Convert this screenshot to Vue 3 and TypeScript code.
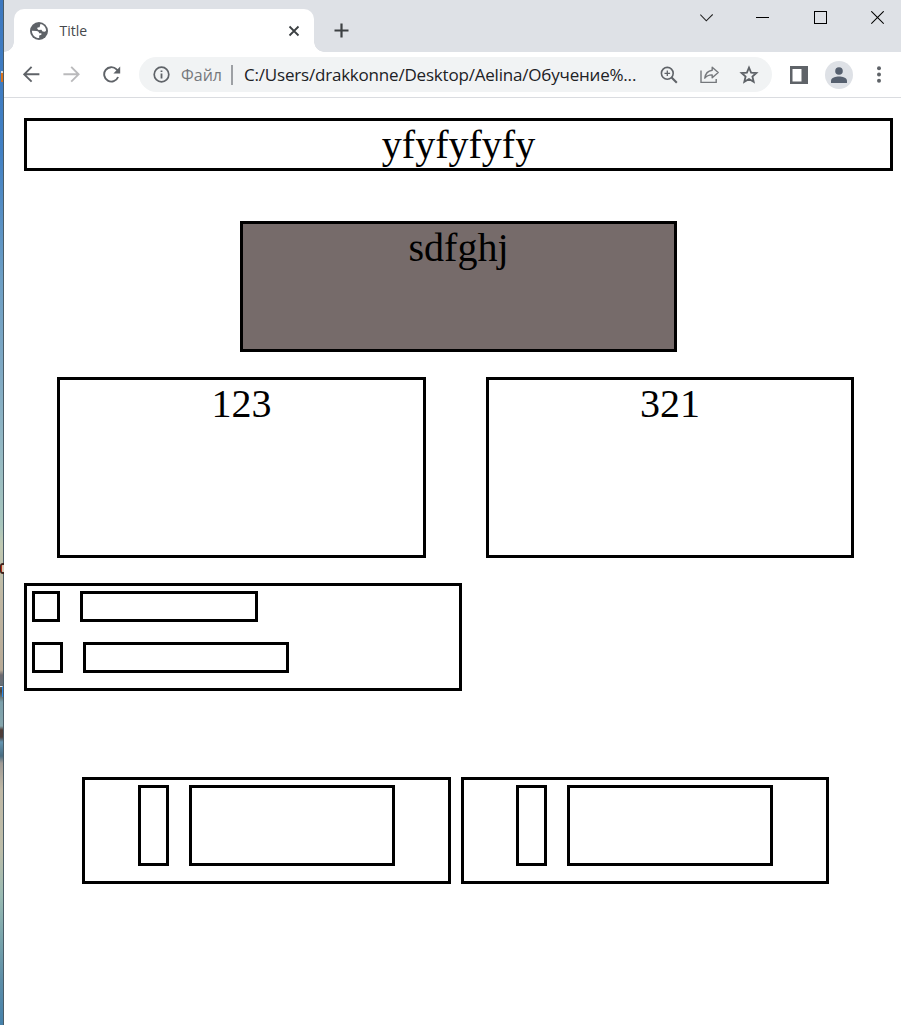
<script setup lang="ts">
interface Panel {
  id: string
  label: string
}

const panels: Panel[] = [
  { id: 'left', label: '123' },
  { id: 'right', label: '321' },
]
const rows: string[] = ['short', 'long']
const cards: string[] = ['first', 'second']
</script>

<template>
  <div class="screen">
    <div class="desktop">
      <i class="spot spot-orange"></i>
      <i class="spot spot-red"></i>
      <i class="spot spot-blue"></i>
    </div>
    <div class="window">
      <header class="tabstrip">
        <div class="tab">
          <svg class="globe" width="20" height="20" viewBox="0 0 20 20">
            <circle cx="10" cy="10" r="9" fill="#5f6368" />
            <path d="M11.4 3 C14.6 3.6 17 6.4 17.1 9.6 L16 10.8 L13.6 10.4 L12.4 8.8 L9.6 9 L8.2 7.8 L8.6 6.6 L10.6 6.2 Z" fill="#fff" />
            <path d="M2.9 9.8 L7.4 9.9 C9.4 10 10 11.2 10.2 12.2 H12.4 V13.8 L10.2 14.6 V17.1 C6 17.1 2.9 13.9 2.9 9.8 Z" fill="#fff" />
          </svg>
          <span class="tab-title">Title</span>
          <svg class="tab-close" width="12" height="12" viewBox="0 0 12 12">
            <path d="M1.5 1.5 L10.5 10.5 M10.5 1.5 L1.5 10.5" stroke="#3c4043" stroke-width="1.8" />
          </svg>
        </div>
        <svg class="new-tab" width="15" height="15" viewBox="0 0 15 15">
          <path d="M7.5 0.5 V14.5 M0.5 7.5 H14.5" stroke="#3c4043" stroke-width="2.2" />
        </svg>
        <div class="controls">
          <svg width="13" height="14" viewBox="0 0 13 14"><path d="M0.3 3.6 L6.3 9.8 L12.7 3.4" fill="none" stroke="#222" stroke-width="1.1" /></svg>
          <svg width="13" height="14" viewBox="0 0 13 14"><path d="M0 6.5 H13" stroke="#000" /></svg>
          <svg width="13" height="14" viewBox="0 0 13 14"><rect x="0.5" y="0.5" width="12" height="12" fill="none" stroke="#000" /></svg>
          <svg width="13" height="14" viewBox="0 0 13 14"><path d="M0.3 0.3 L12.7 12.7 M12.7 0.3 L0.3 12.7" stroke="#000" stroke-width="1.1" /></svg>
        </div>
      </header>

      <nav class="toolbar">
        <svg class="nav-icon" width="18" height="18" viewBox="0 0 18 18">
          <path d="M16.4 8.3 H1.4 M8.6 0.9 L1.2 8.3 L8.6 15.7" fill="none" stroke="#5f6368" stroke-width="1.9" />
        </svg>
        <svg class="nav-icon" width="18" height="18" viewBox="0 0 18 18">
          <path d="M0.4 8.3 H15.4 M8.2 0.9 L15.6 8.3 L8.2 15.7" fill="none" stroke="#bababc" stroke-width="1.9" />
        </svg>
        <svg class="nav-icon" width="18" height="18" viewBox="0 0 18 18">
          <path d="M15.1 11 A7.2 7.2 0 1 1 13.6 3.4 L15.6 5.4" fill="none" stroke="#5f6368" stroke-width="1.9" />
          <path d="M17.2 0.6 V7.4 H10.4 Z" fill="#5f6368" />
        </svg>
        <div class="omnibox">
          <svg width="17" height="17" viewBox="0 0 17 17">
            <circle cx="8.5" cy="8.5" r="7.3" fill="none" stroke="#5f6368" stroke-width="1.7" />
            <path d="M8.5 7.4 V12.6 M8.5 4.4 V6.1" stroke="#5f6368" stroke-width="1.8" />
          </svg>
          <span class="scheme">Файл</span>
          <i class="divider"></i>
          <span class="address">C:/Users/drakkonne/Desktop/Aelina/Обучение%...</span>
          <svg class="zoom-icon" width="18" height="18" viewBox="0 0 18 18">
            <circle cx="7.3" cy="7.3" r="5.9" fill="none" stroke="#5f6368" stroke-width="1.6" />
            <path d="M11.6 11.6 L16.8 16.8" stroke="#5f6368" stroke-width="2.1" />
            <path d="M7.3 4.5 V10.1 M4.5 7.3 H10.1" stroke="#5f6368" stroke-width="1.3" />
          </svg>
          <svg class="share-icon" width="20" height="18" viewBox="0 0 20 18">
            <path d="M1 4.5 V16.4 H16.2 V13" fill="none" stroke="#75787c" stroke-width="1.4" />
            <path d="M12.2 1.2 L18.2 6.5 L12.2 11.8 V8.9 C8.8 8.8 6.6 9.8 4.8 12.2 C5.3 8.4 7.9 4.9 12.2 4.3 Z" fill="none" stroke="#75787c" stroke-width="1.4" stroke-linejoin="round" />
          </svg>
          <svg class="star-icon" width="20" height="20" viewBox="0 0 20 20">
            <path d="M10 2.6 L12.1 7.6 L17.4 8 L13.4 11.5 L14.7 16.8 L10 14 L5.3 16.8 L6.6 11.5 L2.6 8 L7.9 7.6 Z" fill="none" stroke="#5f6368" stroke-width="1.8" />
          </svg>
        </div>
        <svg class="side-panel" width="18" height="18" viewBox="0 0 18 18">
          <path fill-rule="evenodd" d="M0 0 H18 V18 H0 Z M2.5 3 V15.5 H11.5 V3 Z" fill="#5f6368" />
        </svg>
        <svg class="avatar" width="28" height="28" viewBox="0 0 28 28">
          <circle cx="14" cy="14" r="14" fill="#dee1e6" />
          <circle cx="14" cy="10" r="3.8" fill="#56606f" />
          <path d="M6 22 V19.8 C6 16.8 10.8 15.5 14 15.5 S22 16.8 22 19.8 V22 Z" fill="#56606f" />
        </svg>
        <svg class="menu" width="4" height="18" viewBox="0 0 4 18">
          <circle cx="2" cy="2.2" r="2" fill="#5f6368" /><circle cx="2" cy="8.5" r="2" fill="#5f6368" /><circle cx="2" cy="14.8" r="2" fill="#5f6368" />
        </svg>
      </nav>

      <main class="page">
        <div class="box banner">yfyfyfyfy</div>
        <div class="box hero">sdfghj</div>
        <section class="panels">
          <div v-for="p in panels" :key="p.id" class="box panel" :class="p.id">{{ p.label }}</div>
        </section>
        <section class="box list">
          <div v-for="r in rows" :key="r" class="row" :class="r">
            <div class="box square"></div>
            <div class="box bar"></div>
          </div>
        </section>
        <section class="cards">
          <div v-for="c in cards" :key="c" class="box card" :class="c">
            <div class="box slim"></div>
            <div class="box wide"></div>
          </div>
        </section>
      </main>
    </div>
  </div>
</template>

<style>
body {
  margin: 0;
  overflow: hidden;
}
</style>

<style scoped>
* {
  box-sizing: border-box;
}
svg {
  display: block;
  flex: none;
}
.screen {
  display: flex;
  width: 901px;
  height: 1025px;
  overflow: hidden;
  background: #fff;
}
.desktop {
  position: relative;
  flex: none;
  width: 4px;
  border-right: 1px solid #4a5c66;
  background: linear-gradient(#3d78bf 0, #4180c4 150px, #6d9fc5 280px, #7fa9c4 370px, #94b9c4 450px, #a8c6bd 525px, #c0c9b2 545px, #c0b7a3 600px, #b9ab97 670px, #6d6a70 675px, #66717b 684px, #4a4038 691px, #7ba0ab 702px, #86a6ad 726px, #4e3c36 730px, #4c3e3b 737px, #6495b1 742px, #496d82 756px, #a09b96 763px, #c0b9a6 790px, #bdbda9 850px, #9abbb3 895px, #78a4ac 940px, #5d8ea8 980px, #4581ab 1025px);
}
.spot {
  position: absolute;
}
.spot-orange {
  left: 1px;
  top: 71px;
  width: 2px;
  height: 11px;
  border-top: 2px solid #d8d8d8;
  background: #d8721d;
}
.spot-red {
  left: 0;
  top: 563px;
  width: 4px;
  height: 11px;
  border: solid #3b211b;
  border-width: 2px 0 2px 1px;
  border-radius: 3px 0 0 3px;
  background: linear-gradient(90deg, #b52b16 1px, #d8cbb4 1px);
}
.spot-blue {
  left: 0;
  top: 686px;
  width: 3px;
  height: 11px;
  border-top: 1px solid #eee;
  border-right: 1px solid #2d8ceb;
}
.window {
  flex: none;
  width: 897px;
  font-family: "Open Sans", "Noto Sans", sans-serif;
}
.tabstrip {
  display: flex;
  height: 52px;
  padding-left: 10px;
  background: #dee1e6;
}
.tab {
  position: relative;
  display: flex;
  align-items: center;
  width: 300px;
  height: 43px;
  margin-top: 9px;
  padding: 0 14px 0 15px;
  border-radius: 10px 10px 0 0;
  background: #fff;
}
.tab::before,
.tab::after {
  content: "";
  position: absolute;
  bottom: 0;
  width: 10px;
  height: 10px;
}
.tab::before {
  left: -10px;
  background: radial-gradient(circle at 0 0, transparent 9.5px, #fff 10px);
}
.tab::after {
  right: -10px;
  background: radial-gradient(circle at 100% 0, transparent 9.5px, #fff 10px);
}
.tab-title {
  flex: 1;
  margin-left: 10.5px;
  font-size: 14px;
  line-height: 20px;
  color: #45484c;
}
.new-tab {
  margin: 23px 0 0 20px;
}
.controls {
  display: flex;
  gap: 44.5px;
  margin: 11px 17px 0 auto;
}
.controls svg:first-child {
  margin-right: -1.5px;
}
.toolbar {
  display: flex;
  align-items: center;
  height: 46px;
  padding-left: 19px;
  border-bottom: 1px solid #dadce0;
}
.nav-icon {
  margin-right: 22px;
}
.omnibox {
  display: flex;
  align-items: center;
  flex: none;
  width: 633px;
  height: 35px;
  margin-left: -4px;
  padding-left: 14px;
  border-radius: 18px;
  background: #f1f3f4;
  font-size: 16px;
  line-height: 22px;
  white-space: nowrap;
}
.scheme {
  width: 50px;
  margin-left: 11px;
  color: #75787c;
}
.divider {
  width: 2px;
  height: 20px;
  background: #9da0a4;
}
.address {
  width: 393px;
  margin-left: 11px;
  font-size: 17px;
  letter-spacing: -0.2px;
  color: #202124;
}
.zoom-icon {
  margin-left: 23px;
}
.share-icon {
  margin-left: 22px;
}
.star-icon {
  margin-left: 19px;
}
.side-panel {
  margin-left: 18px;
}
.avatar {
  margin-left: 17px;
}
.menu {
  margin-left: 24px;
}
.page {
  padding: 20px 8px 0 20px;
  font-family: "Liberation Serif", "Times New Roman", serif;
  font-size: 40px;
  line-height: 46px;
  text-align: center;
  color: #000;
}
.box {
  flex: none;
  border: 3px solid #000;
}
.banner {
  height: 53px;
  padding-top: 1px;
}
.hero {
  width: 437px;
  height: 131px;
  margin: 50px auto 0;
  padding-top: 1px;
  background: #766b6a;
}
.panels {
  display: flex;
  gap: 60px;
  margin: 25px 0 0 33px;
}
.panel {
  height: 181px;
  padding-top: 1px;
}
.panel.left {
  width: 369px;
}
.panel.right {
  width: 368px;
}
.list {
  display: flex;
  flex-direction: column;
  gap: 20px;
  width: 438px;
  height: 108px;
  margin-top: 25px;
  padding: 5px;
}
.row {
  display: flex;
  gap: 20px;
  height: 31px;
}
.short .square {
  width: 28px;
}
.short .bar {
  width: 178px;
}
.long .square {
  width: 31px;
}
.long .bar {
  width: 206px;
}
.cards {
  display: flex;
  gap: 10px;
  margin: 86px 0 0 58px;
}
.card {
  display: flex;
  gap: 20px;
  height: 107px;
  padding-top: 5px;
}
.card.first {
  width: 369px;
  padding-left: 53px;
}
.card.second {
  width: 368px;
  padding-left: 52px;
}
.slim {
  width: 31px;
  height: 81px;
}
.wide {
  width: 206px;
  height: 81px;
}
</style>
